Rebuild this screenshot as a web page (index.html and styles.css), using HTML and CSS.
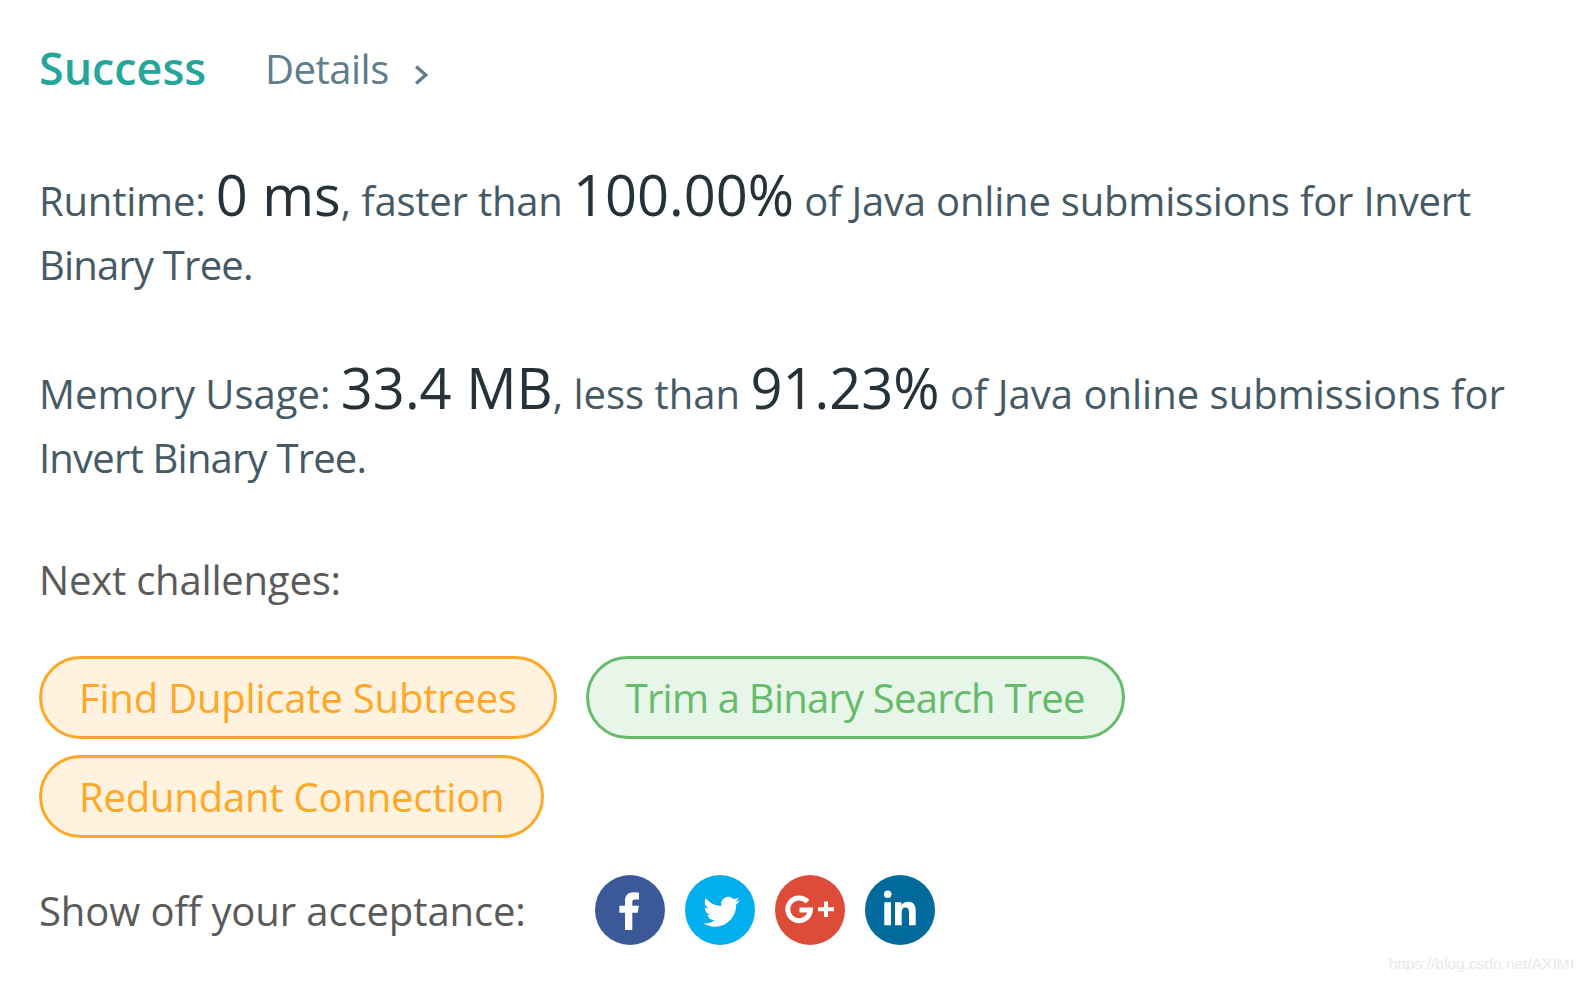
FILE: index.html
```html
<!DOCTYPE html>
<html lang="en">
<head>
<meta charset="UTF-8">
<meta name="viewport" content="width=device-width, initial-scale=1.0">
<title>Submission Result</title>
<link rel="stylesheet" href="styles.css">
</head>
<body>

<div class="result">
    <div class="result-header">
        <span class="result-status">Success</span>
        <a class="result-details">Details<svg class="details-arrow" viewBox="0 0 14 20"><path d="M2.5 3l8 7-8 7" /></svg></a>
    </div>

    <p class="result-line">Runtime: <span class="big">0 ms</span>, faster than <span class="big">100.00%</span> of Java online submissions for Invert <span class="tail">Binary Tree.</span></p>
    <p class="result-line memory">Memory Usage: <span class="big">33.4 MB</span>, less than <span class="big">91.23%</span> of Java online submissions for <span class="tail">Invert Binary Tree.</span></p>

    <div class="next-label">Next challenges:</div>
    <div class="challenges">
        <a class="pill medium">Find Duplicate Subtrees</a>
        <a class="pill easy">Trim a Binary Search Tree</a>
        <a class="pill medium">Redundant Connection</a>
    </div>

    <div class="share">
        <span class="share-label">Show off your acceptance:</span>
        <div class="share-icons">
            <svg class="share-icon" viewBox="0 0 70 70">
                <circle class="fb" cx="35" cy="35" r="35" />
                <path class="glyph" d="M30 55V37.7H24.3V30.7H30V26C30 20 33.5 17.3 38.5 17.3C41 17.3 43 17.5 44 17.7V24.5H40C37.8 24.5 37.3 25.5 37.3 27.5V30.7H43.8L42.8 37.7H37.3V55Z" />
            </svg>
            <svg class="share-icon" viewBox="0 0 70 70">
                <circle class="tw" cx="35" cy="35" r="35" />
                <path class="glyph" transform="translate(18.3 18.5) scale(1.525)" d="M23.953 4.57a10 10 0 01-2.825.775 4.958 4.958 0 002.163-2.723c-.951.555-2.005.959-3.127 1.184a4.92 4.92 0 00-8.384 4.482C7.69 8.095 4.067 6.13 1.64 3.162a4.822 4.822 0 00-.666 2.475c0 1.71.87 3.213 2.188 4.096a4.904 4.904 0 01-2.228-.616v.06a4.923 4.923 0 003.946 4.827 4.996 4.996 0 01-2.212.085 4.936 4.936 0 004.604 3.417 9.867 9.867 0 01-6.102 2.105c-.39 0-.779-.023-1.17-.067a13.995 13.995 0 007.557 2.209c9.053 0 13.998-7.496 13.998-13.985 0-.21 0-.42-.015-.63A9.935 9.935 0 0024 4.59z" />
            </svg>
            <svg class="share-icon" viewBox="0 0 70 70">
                <circle class="gp" cx="35" cy="35" r="35" />
                <path class="glyph-line" d="M32.5 26.7A11.3 11.3 0 1 0 35.4 35H24.5" />
                <path class="glyph" d="M49 26.5H53V32.3H59V36.3H53V42.1H49V36.3H43V32.3H49Z" />
            </svg>
            <svg class="share-icon" viewBox="0 0 70 70">
                <circle class="in" cx="35" cy="35" r="35" />
                <circle class="glyph" cx="22.7" cy="19.3" r="3.8" />
                <path class="glyph" d="M19.3 27.3H26V50.3H19.3ZM30 27.3H36.5V30.3C37.8 28 40 26.8 43 26.8C48.5 26.8 50.7 30 50.7 36V50.3H44V37.5C44 34.5 43 32.6 40.5 32.6C38 32.6 36.7 34.5 36.7 37.5V50.3H30Z" />
            </svg>
        </div>
    </div>
</div>

<span class="watermark">https://blog.csdn.net/AXIMI</span>

</body>
</html>
```

FILE: styles.css
```css
html, body {
    height: 100%;
}

body {
    margin: 0;
    position: relative;
    overflow: hidden;
    background: #fff;
    font-family: "Open Sans", "Noto Sans", sans-serif;
    font-size: 40px;
    letter-spacing: -0.2px;
    color: #455a64;
}

.result {
    padding: 37px 39px 0;
}

.result-header {
    display: flex;
    align-items: center;
}

.result-status {
    font-size: 44.8px;
    font-weight: 600;
    letter-spacing: 0;
    color: #26a69a;
}

.result-details {
    margin: 2px 0 0 59px;
    font-size: 40px;
    letter-spacing: -0.5px;
    color: #607d8b;
}

.details-arrow {
    width: 17px;
    height: 24px;
    margin-left: 24px;
    vertical-align: -3px;
}

.details-arrow path {
    fill: none;
    stroke: #607d8b;
    stroke-width: 2.8;
}

.result-line {
    margin: 65px 0 0;
    width: 1500px;
    line-height: 63.6px;
}

.result-line.memory {
    margin-top: 60px;
    letter-spacing: 0;
}

.big {
    font-size: 56px;
    letter-spacing: 0;
    color: #263238;
}

.tail {
    letter-spacing: -0.8px;
}

.next-label {
    margin-top: 63px;
    color: #5a5a5a;
}

.challenges {
    display: flex;
    flex-wrap: wrap;
    gap: 16px 29px;
    width: 1200px;
    margin-top: 49px;
}

.pill {
    display: flex;
    align-items: center;
    height: 83px;
    box-sizing: border-box;
    padding: 0 37px;
    border: 3px solid;
    border-radius: 42px;
}

.medium {
    color: #ffa726;
    background: #fff3e0;
}

.easy {
    letter-spacing: -0.78px;
    color: #66bb6a;
    background: #e8f5e9;
}

.share {
    display: flex;
    align-items: center;
    margin-top: 37px;
}

.share-label {
    width: 556px;
    letter-spacing: -0.1px;
    color: #5a5a5a;
}

.share-icons {
    display: flex;
    gap: 20px;
}

.share-icon {
    width: 70px;
    height: 70px;
}

.fb { fill: #3b5998; }
.tw { fill: #03aeef; }
.gp { fill: #dd4b39; }
.in { fill: #006a9d; }

.glyph {
    fill: #fff;
}

.glyph-line {
    fill: none;
    stroke: #fff;
    stroke-width: 5;
}

.watermark {
    position: absolute;
    right: 8px;
    bottom: 9px;
    font-family: "Liberation Sans", sans-serif;
    font-size: 15.5px;
    letter-spacing: 0;
    color: #e8e8e8;
}
```
